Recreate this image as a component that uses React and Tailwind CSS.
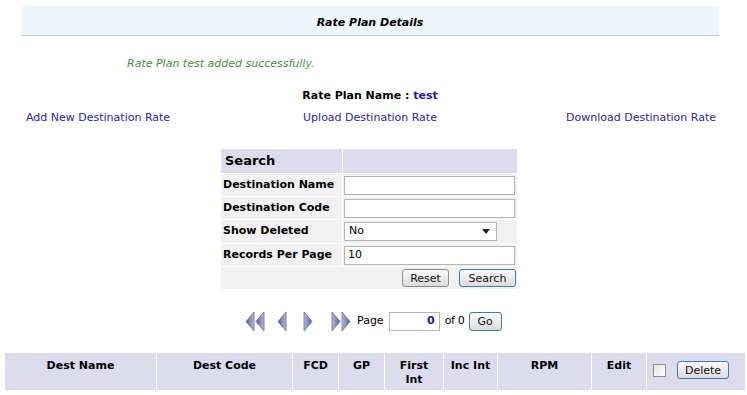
import React from "react";

const font = { fontFamily: '"DejaVu Sans", Verdana, sans-serif' };

function Arrow({ dir = "left", double = false }) {
    /* small lavender triangles used by the pager */
    const w = double ? 20 : 13;
    const tri = (x) =>
        dir === "left"
            ? `${x + 9},1 ${x + 9},20 ${x + 1},10.5`
            : `${x + 1},1 ${x + 1},20 ${x + 9},10.5`;
    const xs = double ? [0, 10] : [1];
    return (
        <svg width={w} height="21" viewBox={`0 0 ${w} 21`}>
            <defs>
                <linearGradient id={`g-${dir}`} x1="0" y1="0" x2="1" y2="0">
                    <stop offset="0" stopColor={dir === "left" ? "#5a5a9c" : "#b9b9dc"} />
                    <stop offset="1" stopColor={dir === "left" ? "#b9b9dc" : "#5a5a9c"} />
                </linearGradient>
            </defs>
            {xs.map((x) => (
                <polygon
                    key={x}
                    points={tri(x)}
                    fill={`url(#g-${dir})`}
                    stroke="#6a6aa8"
                    strokeWidth="0.8"
                />
            ))}
        </svg>
    );
}

function Btn({ children, focus, className = "" }) {
    return (
        <button
            className={`h-[18px] rounded-[3px] border text-[11px] leading-none text-[#111] bg-gradient-to-b from-[#fafafa] to-[#dcdcdc] ${
                focus ? "border-[#3c7fb1]" : "border-[#8a8a8a]"
            } ${className}`}
            style={font}
        >
            {children}
        </button>
    );
}

export default function App() {
    const cols = [
        ["Dest Name", "w-[151px]"],
        ["Dest Code", "w-[135px]"],
        ["FCD", "w-[45px]"],
        ["GP", "w-[45px]"],
        ["First Int", "w-[58px]"],
        ["Inc Int", "w-[53px]"],
        ["RPM", "w-[93px]"],
        ["Edit", "w-[54px]"],
    ];

    return (
        <div className="w-[747px] h-[395px] bg-white text-[11px] text-black overflow-hidden" style={font}>
            {/* Title band */}
            <div className="ml-[21px] w-[698px] mt-[6px] h-[30px] bg-[#eef6fd] border-b border-[#c2c9d1] flex items-center justify-center pt-[6px]">
                <span className="font-bold italic">Rate Plan Details</span>
            </div>

            <div className="pl-[127px] mt-[21px] h-[14px] leading-[14px] italic text-[#3a9a3a]">
                Rate Plan test added successfully.
            </div>

            <div className="ml-[21px] w-[698px] mt-[18px] h-[14px] leading-[14px] text-center font-bold">
                Rate Plan Name : <span className="text-[#1c1cb4]">test</span>
            </div>

            <div className="ml-[21px] w-[698px] mt-[8px] h-[14px] leading-[14px] grid grid-cols-3 text-[#2626b0]">
                <span className="pl-[5px]">Add New Destination Rate</span>
                <span className="text-center">Upload Destination Rate</span>
                <span className="text-right pr-[3px]">Download Destination Rate</span>
            </div>

            {/* Search box */}
            <div className="mt-[23px] ml-[220px] w-[298px]">
                <table className="w-[298px] border-separate border-spacing-[1px]">
                    <tbody>
                        <tr className="h-[24px]">
                            <td className="w-[121px] bg-[#dcdcec] font-bold text-[13px] px-[4px]">Search</td>
                            <td className="bg-[#dcdcec]"></td>
                        </tr>
                        {["Destination Name", "Destination Code"].map((l) => (
                            <tr key={l} className="h-[22px]">
                                <td className="bg-[#f1f1f1] font-bold px-[2px] whitespace-nowrap">{l}</td>
                                <td className="bg-[#f1f1f1] px-[1px]">
                                    <input className="w-[171px] h-[19px] border border-[#b5b5b5] bg-white block" />
                                </td>
                            </tr>
                        ))}
                        <tr className="h-[23px]">
                            <td className="bg-[#f1f1f1] font-bold px-[2px]">Show Deleted</td>
                            <td className="bg-[#f1f1f1] px-[1px]">
                                <div className="w-[153px] h-[19px] border border-[#b5b5b5] bg-white flex items-center justify-between px-[4px]">
                                    <span>No</span>
                                    <svg width="8" height="5" viewBox="0 0 8 5" className="mr-[2px]">
                                        <polygon points="0,0 8,0 4,5" fill="#222" />
                                    </svg>
                                </div>
                            </td>
                        </tr>
                        <tr className="h-[22px]">
                            <td className="bg-[#f1f1f1] font-bold px-[2px] whitespace-nowrap">Records Per Page</td>
                            <td className="bg-[#f1f1f1] px-[1px]">
                                <div className="w-[171px] h-[19px] border border-[#b5b5b5] bg-white flex items-center px-[3px]">10</div>
                            </td>
                        </tr>
                        <tr className="h-[22px]">
                            <td colSpan={2} className="bg-[#f1f1f1] pr-[1px]">
                                <div className="flex justify-end gap-[10px]">
                                    <Btn className="w-[47px]">Reset</Btn>
                                    <Btn focus className="w-[57px]">Search</Btn>
                                </div>
                            </td>
                        </tr>
                    </tbody>
                </table>
            </div>

            {/* Pager */}
            <div className="mt-[21px] ml-[245px] h-[21px] flex items-center">
                <Arrow dir="left" double />
                <span className="w-[11px]" />
                <Arrow dir="left" />
                <span className="w-[13px]" />
                <Arrow dir="right" />
                <span className="w-[16px]" />
                <Arrow dir="right" double />
                <span className="ml-[6px]">Page</span>
                <div className="ml-[5px] w-[51px] h-[19px] border border-[#b5b5b5] flex items-center justify-end pr-[4px] font-bold text-[#1c1cb4]">0</div>
                <span className="ml-[5px] tracking-[-0.3px]">of 0</span>
                <Btn focus className="ml-[4px] w-[33px] h-[19px]">Go</Btn>
            </div>

            {/* Results header */}
            <div className="mt-[21px] ml-[5px] w-[740px] h-[37px] flex gap-[1px]">
                {cols.map(([c, w]) => (
                    <div key={c} className={`${w} shrink-0 bg-[#dcdcec] font-bold text-center pt-[6px] leading-[14px]`}>
                        {c === "First Int" ? (
                            <>
                                First
                                <br />
                                Int
                            </>
                        ) : (
                            c
                        )}
                    </div>
                ))}
                <div className="flex-1 bg-[#dcdcec] flex items-start pt-[8px] pl-[6px] gap-[11px]">
                    <span className="mt-[3px] w-[13px] h-[13px] border border-[#8f8f8f] bg-gradient-to-br from-[#e4e4e4] to-white" />
                    <Btn focus className="w-[52px]">Delete</Btn>
                </div>
            </div>
        </div>
    );
}
